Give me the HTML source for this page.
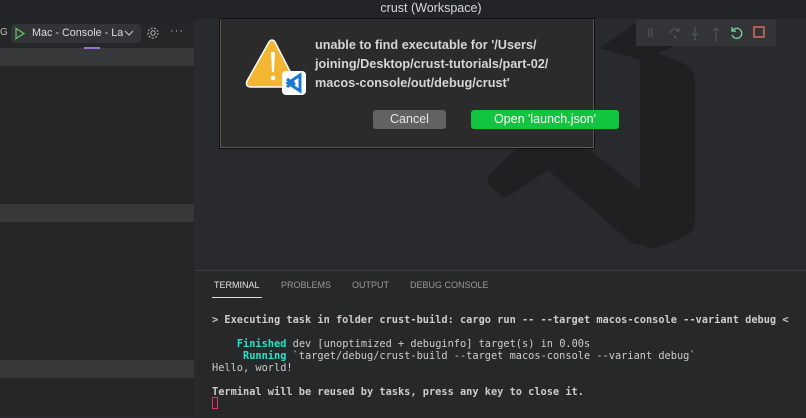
<!DOCTYPE html>
<html><head><style>
body{margin:0;width:806px;height:417px;overflow:hidden;background:#292a2d;font-family:"Liberation Sans",sans-serif;position:relative}
.abs{position:absolute}
.mono{font-family:"DejaVu Sans Mono","Liberation Mono",monospace;font-size:10.3px;color:#cccccc;white-space:pre;line-height:12px}
</style></head><body>
<div class="abs" style="left:0;top:0;width:806px;height:19px;background:#232427;"></div>
<div class="abs" style="left:0;top:1px;width:806px;text-align:center;font-size:12.5px;color:#d8d8d8;padding-left:56px;box-sizing:border-box">crust (Workspace)</div>
<div class="abs" style="left:0;top:19px;width:195px;height:398px;background:#252628"></div>
<div class="abs" style="left:195px;top:19px;width:1px;height:398px;background:#2d2e31"></div>
<div class="abs" style="left:0;top:48px;width:194px;height:18px;background:#37383a"></div>
<div class="abs" style="left:0;top:204px;width:194px;height:18px;background:#37383a"></div>
<div class="abs" style="left:0;top:360px;width:194px;height:18px;background:#37383a"></div>
<div class="abs" style="left:0;top:27px;font-size:10px;color:#bbb">G</div>
<div class="abs" style="left:11px;top:24px;width:130px;height:19px;background:#333437;border-radius:4px"></div>
<svg class="abs" style="left:14px;top:27px" width="12" height="13"><path d="M2 1.5 L10 6.5 L2 11.5Z" fill="none" stroke="#5fb85f" stroke-width="1.4"/></svg>
<div class="abs" style="left:32px;top:27px;font-size:10.8px;color:#ddd;width:91px;overflow:hidden;white-space:nowrap">Mac - Console - Lau</div>
<svg class="abs" style="left:124px;top:29px" width="10" height="8"><path d="M1 2 L5 6 L9 2" fill="none" stroke="#ccc" stroke-width="1"/></svg>
<div class="abs" style="left:84px;top:47px;width:16px;height:2px;background:#9b6fd6"></div>
<svg class="abs" style="left:146px;top:26px" width="14" height="14"><circle cx="7" cy="7" r="2.2" fill="none" stroke="#bbb"/><circle cx="7" cy="7" r="5" fill="none" stroke="#bbb" stroke-dasharray="2 1.5"/></svg>
<div class="abs" style="left:170px;top:25px;font-size:11px;color:#bbb;letter-spacing:1px">···</div>

<svg class="abs" style="left:0;top:0" width="806" height="417">
<path d="M640 46 L680 62 Q695 68 695 80 L695 222 Q695 232 682 238 L662 246 Q650 251 640 243 Z" fill="#1f2022"/>
<path d="M492 172 Q484 180 492 188 L500 195 Q506 199 512 194 L548 170 L628 240 Q636 247 642 244 L640 190 L590 150 L560 120 L530 135 Z" fill="#1f2022"/>
<path d="M600 48 L640 20 L700 20 L690 40 L640 60 Z" fill="#1f2022"/>
</svg>

<div class="abs" style="left:636px;top:19px;width:140px;height:27px;background:#333437"></div>
<svg class="abs" style="left:640px;top:22px" width="136" height="22">
<path d="M9 6v9M12 6v9" stroke="#4a5560" stroke-width="1.2"/>
<path d="M30 12a5 5 0 0 1 9-3M39 6v3h-3" fill="none" stroke="#4a5560" stroke-width="1.2"/><circle cx="35" cy="15" r="1.2" fill="#4a5560"/>
<path d="M55 5v9M52 11l3 3 3-3" fill="none" stroke="#4a5560" stroke-width="1.2"/><circle cx="55" cy="17" r="1.2" fill="#4a5560"/>
<path d="M76 16V7M73 9l3-3 3 3" fill="none" stroke="#4a5560" stroke-width="1.2"/><circle cx="76" cy="18" r="1.2" fill="#4a5560"/>
<path d="M93 8a5 5 0 1 1 -1 5M92 5v4h4" fill="none" stroke="#73c991" stroke-width="1.4"/>
<rect x="114" y="5" width="10" height="10" fill="none" stroke="#e0715f" stroke-width="1.4"/>
</svg>

<div class="abs" style="left:220px;top:19px;width:372px;height:128px;background:#2b2b2c;border:1px solid #5a5a5a;border-top:none;box-shadow:0 0 0 1px #111"></div>
<svg class="abs" style="left:244px;top:38px" width="64" height="60">
<path d="M25 4 Q28 0 31 4 L51 43 Q53 49 47 49 L7 49 Q1 49 3 43 Z" fill="#f2b632" stroke="#fff" stroke-width="1.5"/>
<path d="M27 14 h4 l-1 20 h-2 z" fill="#fff"/><circle cx="29" cy="40" r="2.3" fill="#fff"/>
<rect x="38" y="33" width="24" height="24" rx="4" fill="#fff"/>
<path d="M56 37 L56 53 L44 45 Z M43 41 L51 47 M43 49 L50 43" fill="none" stroke="#1a7ad0" stroke-width="3"/>
</svg>
<div class="abs" style="left:315px;top:36px;font-size:12.7px;font-weight:bold;color:#d5d5d5;line-height:19px;width:290px">unable to find executable for '/Users/<br>joining/Desktop/crust-tutorials/part-02/<br>macos-console/out/debug/crust'</div>
<div class="abs" style="left:373px;top:110px;width:73px;height:19px;background:#626262;border-radius:3px;color:#e5e5e5;font-size:12.5px;text-align:center;line-height:19px">Cancel</div>
<div class="abs" style="left:471px;top:110px;width:148px;height:19px;background:#12c43e;border-radius:3px;color:#fff;font-size:12.5px;text-align:center;line-height:19px">Open 'launch.json'</div>

<div class="abs" style="left:196px;top:270px;width:610px;height:147px;background:#27282a;border-top:1px solid #3c3d40"></div>
<div class="abs" style="left:214px;top:280px;font-size:9px;color:#e5e5e5">TERMINAL</div>
<div class="abs" style="left:281px;top:280px;font-size:9px;color:#999">PROBLEMS</div>
<div class="abs" style="left:352px;top:280px;font-size:9px;color:#999">OUTPUT</div>
<div class="abs" style="left:410px;top:280px;font-size:9px;color:#999">DEBUG CONSOLE</div>
<div class="abs" style="left:212px;top:297px;width:50px;height:1px;background:#ddd"></div>
<div class="abs mono" style="left:212px;top:314px;font-weight:bold">&gt; Executing task in folder crust-build: cargo run -- --target macos-console --variant debug &lt;</div>
<div class="abs mono" style="left:212px;top:338px">    <b style="color:#22e5c8">Finished</b> dev [unoptimized + debuginfo] target(s) in 0.00s
     <b style="color:#22e5c8">Running</b> `target/debug/crust-build --target macos-console --variant debug`
Hello, world!

<b>Terminal will be reused by tasks, press any key to close it.</b></div>
<div class="abs" style="left:212px;top:397px;width:4px;height:10px;border:1px solid #e8336a"></div>
</body></html>
